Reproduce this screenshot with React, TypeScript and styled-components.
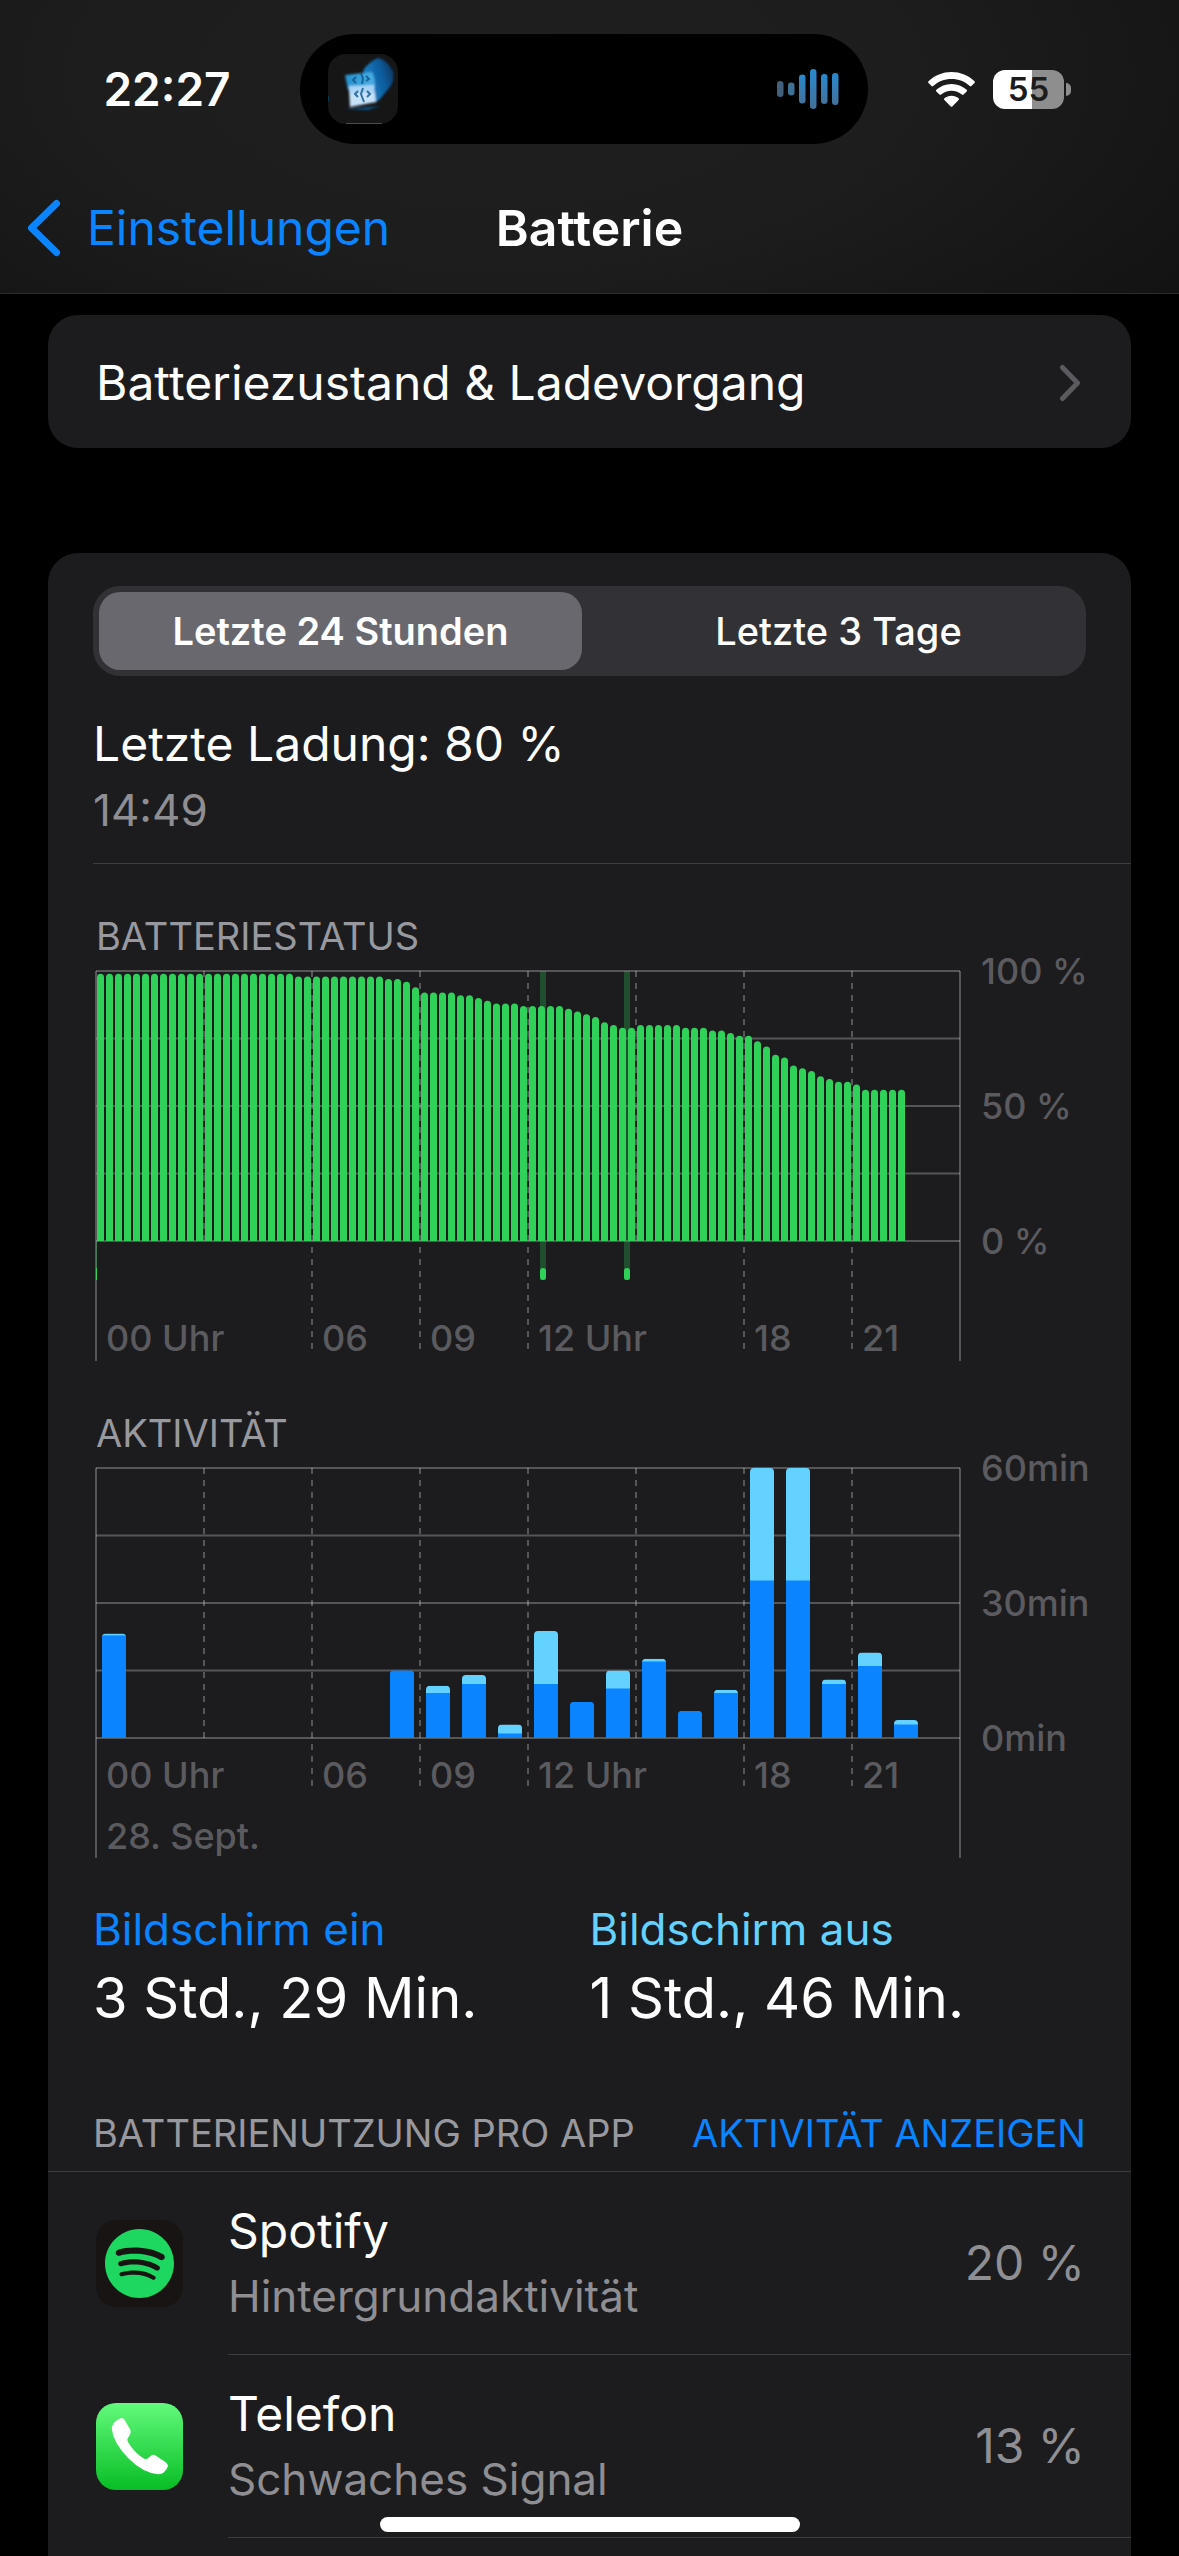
import React, { useState } from 'react';
import styled, { createGlobalStyle } from 'styled-components';

const color = {
  blue: '#0a84ff',
  sky: '#64d2ff',
  green: '#30d158',
  card: '#1c1c1e',
  line: '#3d3d41',
  axis: '#5b5b5f',
  secondary: '#8e8e93',
  caption: '#98989f',
};

const Global = createGlobalStyle`
  *, *::before, *::after { box-sizing: border-box; }
  html, body { margin: 0; background: #000; }
  body {
    color: #fff;
    font-family: Inter, "Liberation Sans", sans-serif;
    font-size: 48px;
    line-height: 60px;
  }
  h1, h2, p, ul { margin: 0; padding: 0; font: inherit; }
  ul { list-style: none; }
  button { margin: 0; padding: 0; border: 0; background: none; font: inherit; color: inherit; cursor: pointer; }
  svg { display: block; flex: none; }
`;

const Screen = styled.div`
  height: 100vh;
  overflow: hidden;
`;

const Header = styled.header`
  background: radial-gradient(ellipse 70% 130% at 42% 25%, #1f1f1f 0%, #1d1d1d 50%, #131313 100%);
  border-bottom: 1px solid #2b2b2c;
`;

const StatusBar = styled.div`
  display: grid;
  grid-template-columns: 1fr auto 1fr;
  align-items: center;
  padding: 34px 11px 18px 0;
`;

const Clock = styled.time`
  padding-left: 34px;
  text-align: center;
  font-size: 46px;
  font-weight: 600;
`;

const Island = styled.div`
  display: flex;
  align-items: center;
  justify-content: space-between;
  width: 568px;
  height: 110px;
  padding: 0 29px 0 28px;
  border-radius: 55px;
  background: #000;
`;

const StatusIcons = styled.div`
  display: flex;
  align-items: center;
  gap: 18px;
  padding-left: 60px;
`;

const BatteryWrap = styled.div`
  display: flex;
  align-items: center;
  gap: 2px;
`;

const BatteryBody = styled.div`
  width: 71px;
  height: 39px;
  border-radius: 12px;
  background: linear-gradient(90deg, #fff 55%, #8e8e8e 55%);
  color: #1c1c1c;
  font-size: 33px;
  font-weight: 600;
  line-height: 39px;
  text-align: center;
`;

const BatteryCap = styled.div`
  width: 5px;
  height: 13px;
  border-radius: 0 6px 6px 0;
  background: #8e8e8e;
`;

const NavBar = styled.nav`
  display: grid;
  grid-template-columns: 1fr auto 1fr;
  align-items: center;
  height: 131px;
`;

const BackButton = styled.button`
  display: flex;
  align-items: center;
  gap: 26px;
  padding-left: 27px;
  color: ${color.blue};
`;

const NavTitle = styled.h1`
  font-size: 50px;
  font-weight: 600;
`;

const Content = styled.main`
  display: flex;
  flex-direction: column;
  gap: 105px;
  padding: 21px 48px 0;
`;

const LinkCard = styled.button`
  display: flex;
  align-items: center;
  justify-content: space-between;
  width: 100%;
  height: 133px;
  padding: 2px 50px 0 48px;
  border-radius: 30px;
  background: ${color.card};
  text-align: left;
`;

const Card = styled.section`
  padding: 33px 0 60px;
  border-radius: 30px;
  background: ${color.card};
`;

const Segmented = styled.fieldset`
  display: grid;
  grid-template-columns: 1fr 1fr;
  gap: 15px;
  margin: 0 45px;
  padding: 6px;
  border: 0;
  border-radius: 27px;
  background: #313136;
`;

const Segment = styled.label<{ $active: boolean }>`
  border-radius: 21px;
  background: ${(p) => (p.$active ? '#69686f' : 'transparent')};
  font-size: 38px;
  font-weight: ${(p) => (p.$active ? 600 : 500)};
  line-height: 78px;
  text-align: center;
  cursor: pointer;
`;

const HiddenRadio = styled.input`
  position: absolute;
  width: 1px;
  height: 1px;
  margin: 0;
  opacity: 0;
`;

const LastCharge = styled.div`
  display: flex;
  flex-direction: column;
  gap: 9px;
  margin-left: 45px;
  padding: 38px 0 26px;
  border-bottom: 1px solid ${color.line};
`;

const Secondary = styled.p`
  color: ${color.secondary};
  font-size: 44px;
  line-height: 54px;
`;

const ChartSection = styled.section`
  padding: 53px 0 0 48px;
`;

const ChartTitle = styled.h2`
  color: ${color.caption};
  font-size: 38px;
  line-height: 38px;
`;

const ChartGrid = styled.div`
  display: grid;
  grid-template-columns: 1fr 171px;
`;

const Plot = styled.div`
  display: grid;
  grid-template-rows: 270px 120px;
  margin-top: 16px;
`;

const PlotDrawing = styled.svg`
  grid-area: 1 / 1 / 3 / 2;
  width: 100%;
  height: 390px;
  overflow: visible;
`;

const XAxis = styled.div<{ $top: number }>`
  grid-area: 2 / 1 / 3 / 2;
  display: flex;
  flex-direction: column;
  gap: 21px;
  padding-top: ${(p) => p.$top}px;
  color: ${color.axis};
  font-size: 36px;
  font-weight: 500;
  line-height: 40px;
`;

const Ticks = styled.div`
  display: grid;
  grid-template-columns: repeat(8, 1fr);
`;

const Tick = styled.span`
  width: 0;
  padding-left: 10px;
  white-space: nowrap;
`;

const YAxis = styled.div`
  display: flex;
  flex-direction: column;
  justify-content: space-between;
  height: 302px;
  padding-left: 21px;
  color: ${color.axis};
  font-size: 36px;
  font-weight: 500;
  line-height: 32px;
`;

const Totals = styled.div`
  display: grid;
  grid-template-columns: 1fr 1fr;
  padding: 44px 45px 77px;
`;

const TotalLabel = styled.p<{ $tone: string }>`
  margin-bottom: 7px;
  color: ${(p) => p.$tone};
  font-size: 44px;
  line-height: 54px;
`;

const TotalValue = styled.p`
  font-size: 56px;
  line-height: 70px;
`;

const ListHeader = styled.div`
  display: flex;
  justify-content: space-between;
  padding: 0 45px 15px;
  border-bottom: 1px solid ${color.line};
  color: ${color.caption};
  font-size: 38px;
  line-height: 46px;
  white-space: nowrap;
`;

const ListAction = styled.button`
  color: ${color.blue};
`;

const AppRow = styled.li`
  display: flex;
  align-items: center;
  gap: 45px;
  padding-left: 48px;
`;

const AppBody = styled.div`
  display: flex;
  flex: 1;
  align-items: center;
  justify-content: space-between;
  height: 183px;
  padding-right: 46px;
  border-bottom: 1px solid ${color.line};
`;

const AppText = styled.div`
  display: flex;
  flex-direction: column;
  gap: 8px;
  padding-bottom: 3px;
`;

const AppShare = styled.span`
  color: ${color.secondary};
`;

const HomeIndicator = styled.div`
  position: fixed;
  bottom: 24px;
  left: 50%;
  width: 420px;
  height: 15px;
  margin-left: -210px;
  border-radius: 8px;
  background: #fff;
`;

const run = (count: number, value: number): number[] => Array(count).fill(value);

/* Charge level in percent, one value for each quarter of an hour. */
const levels: number[] = [
  ...run(22, 99), ...run(10, 98), 97, 97, 96, 94, ...run(4, 92), 91, 91, 90, 89,
  88, 88, 88, ...run(5, 87), 86, 85, 84, 83, 81, 80, 79, 79, ...run(5, 80),
  79, 79, 79, 78, 78, 77, 76, 76, 74, 72, 69, 68, 65, 64, 63, 61, 60, 59, 59, 58,
  ...run(5, 56),
];

/* Minutes for each hour: [hour, screen on, on and off together]. */
const activity: [number, number, number][] = [
  [0, 22.8, 23.2], [8, 15, 15], [9, 10, 11.6], [10, 12, 14], [11, 1, 3],
  [12, 12, 23.8], [13, 8, 8], [14, 11, 15], [15, 17, 17.6], [16, 6, 6],
  [17, 10, 10.7], [18, 35, 60], [19, 35, 60], [20, 12, 13], [21, 16, 19], [22, 3, 4],
];

const PLOT = 270;
const pct = (part: number, whole: number) => `${(part / whole) * 100}%`;

function GridLines({ tickEnd }: { tickEnd: number }) {
  return (
    <g stroke="#fff" strokeOpacity={0.26} strokeWidth={2}>
      {[0, 0.25, 0.5, 0.75, 1].map((f) => (
        <line key={f} x1="0" x2="100%" y1={PLOT * f} y2={PLOT * f} />
      ))}
      <line x1="0" x2="0" y1="0" y2="390" />
      <line x1="100%" x2="100%" y1="0" y2="390" />
      {[3, 6, 9, 12, 15, 18, 21].map((h) => (
        <line
          key={h}
          x1={pct(h, 24)}
          x2={pct(h, 24)}
          y1="0"
          y2={h === 3 || h === 15 ? PLOT : tickEnd}
          strokeDasharray="6 6"
        />
      ))}
    </g>
  );
}

function BatteryPlot() {
  return (
    <PlotDrawing role="img" aria-label="Batteriestatus">
      <defs>
        <clipPath id="level-area"><rect x="0" y="-2" width="100%" height={PLOT + 2} /></clipPath>
      </defs>
      <GridLines tickEnd={384} />
      {[444, 528].map((x) => (
        <React.Fragment key={x}>
          <rect x={pct(x, 864)} y="0" width="6" height="309" fill={color.green} opacity={0.28} />
          <rect x={pct(x, 864)} y="297" width="6" height="12" rx="3" fill={color.green} />
        </React.Fragment>
      ))}
      <rect x="0" y="270" width="1" height="27" fill={color.green} opacity={0.28} />
      <rect x="0" y="297" width="1" height="12" fill={color.green} />
      <g clipPath="url(#level-area)">
        {levels.map((v, i) => (
          <svg key={i} x={pct(i, 96)} overflow="visible">
            <rect
              x="1"
              y={PLOT * (1 - v / 100)}
              width="7"
              height={(PLOT * v) / 100 + 8}
              rx="3.5"
              fill={color.green}
            />
          </svg>
        ))}
      </g>
    </PlotDrawing>
  );
}

function ActivityPlot() {
  return (
    <PlotDrawing role="img" aria-label="Aktivität">
      <GridLines tickEnd={324} />
      {activity.map(([hour, on, total]) => {
        const top = PLOT * (1 - total / 60);
        const split = PLOT * (1 - on / 60);
        return (
          <svg key={hour} x={pct(hour, 24)} overflow="visible">
            <clipPath id={`hour-${hour}`}>
              <path d={`M6 ${PLOT}V${top + 4}q0-4 4-4h16q4 0 4 4V${PLOT}z`} />
            </clipPath>
            <g clipPath={`url(#hour-${hour})`}>
              <rect x="6" y={top} width="24" height={PLOT - top} fill={total > on ? color.sky : color.blue} />
              <rect x="6" y={split} width="24" height={PLOT - split} fill={color.blue} />
            </g>
          </svg>
        );
      })}
    </PlotDrawing>
  );
}

const hours = ['00 Uhr', '', '06', '09', '12 Uhr', '', '18', '21'];

function Chart(props: {
  title: string;
  scale: string[];
  tickOffset: number;
  date?: string;
  children: React.ReactNode;
}) {
  return (
    <ChartSection>
      <ChartTitle>{props.title}</ChartTitle>
      <ChartGrid>
        <Plot>
          {props.children}
          <XAxis $top={props.tickOffset}>
            <Ticks>
              {hours.map((h, i) => <Tick key={i}>{h}</Tick>)}
            </Ticks>
            {props.date && <Tick>{props.date}</Tick>}
          </XAxis>
        </Plot>
        <YAxis>
          {props.scale.map((s) => <span key={s}>{s}</span>)}
        </YAxis>
      </ChartGrid>
    </ChartSection>
  );
}

function AlbumArt() {
  return (
    <svg width="70" height="79" viewBox="0 0 70 79">
      <defs>
        <clipPath id="art"><rect width="70" height="70" y="4" rx="18" /></clipPath>
        <filter id="soft" x="-20%" y="-20%" width="140%" height="140%"><feGaussianBlur stdDeviation="1.2" /></filter>
        <linearGradient id="back" x1="0.1" y1="0.6" x2="1" y2="0.2">
          <stop offset="0" stopColor="#1b83c8" />
          <stop offset="0.6" stopColor="#0c5a9a" />
          <stop offset="1" stopColor="#07365f" />
        </linearGradient>
        <linearGradient id="front" x1="0" y1="0" x2="1" y2="0">
          <stop offset="0" stopColor="#2590cc" />
          <stop offset="1" stopColor="#4ab0e6" />
        </linearGradient>
      </defs>
      <g clipPath="url(#art)">
        <rect y="4" width="70" height="70" fill="#161617" />
        <g filter="url(#soft)">
          <path d="M35 21Q40 12 50 8Q58 9 65 21Q67 30 62 37L51 50L46 53z" fill="url(#back)" />
          <path d="M17 25L44 22Q47 28 47 38L20 40z" fill="url(#front)" />
          <path d="M21 38L46 37L48 52L22 57z" fill="#c6e2fb" />
          <path d="M21 36L46 35V43L21 43z" fill="#a9d4f6" />
          <path d="M16 59L52 56L40 60z" fill="#0c4f80" />
        </g>
        <path d="M33 23l2 6-1 5M28 27l-3 3 3 3M38 26l3 3-3 2M35 38l-2 6 3 8M30 41l-3 3 3 3M39 41l3 3-3 3" fill="none" stroke="#0f5489" strokeWidth="2" opacity="0.8" />
        <path d="M18 73.500h36M0 46v5" stroke="#0f5c86" strokeWidth="1" />
      </g>
    </svg>
  );
}

function SoundWave() {
  const bars: [number, string][] = [
    [16, '#40607c'], [13, '#3f7195'], [29, 'url(#wave)'], [40, 'url(#wave)'], [30, 'url(#wave)'], [32, 'url(#wave)'],
  ];
  return (
    <svg width="62" height="40" viewBox="0 0 62 40">
      <linearGradient id="wave" x1="0" y1="0" x2="0" y2="1">
        <stop offset="0" stopColor="#2988cf" />
        <stop offset="1" stopColor="#43719a" />
      </linearGradient>
      {bars.map(([h, fill], i) => (
        <rect key={i} x={i * 11} y={(40 - h) / 2} width="6.5" height={h} rx="3.2" fill={fill} />
      ))}
    </svg>
  );
}

function Wifi() {
  return (
    <svg width="47" height="35" viewBox="0 0 47 35" fill="#fff">
      <path d="M23.5 0C32.300 0 40.500 3.400 46.500 9.200Q47.300 10 46.500 10.900L43.400 14.100Q42.600 14.800 41.800 14.100C37 9.500 30.500 7 23.500 7S10 9.500 5.200 14.100Q4.400 14.800 3.600 14.100L.5 10.900Q-.3 10 .5 9.200C6.500 3.400 14.700 0 23.500 0z" />
      <path d="M23.500 11.900C29.300 11.900 34.700 14.100 38.700 17.800Q39.500 18.600 38.700 19.400L35.500 22.600Q34.700 23.300 33.900 22.600C31.100 20.100 27.500 18.700 23.500 18.700S15.900 20.100 13.100 22.600Q12.300 23.300 11.500 22.600L8.300 19.400Q7.500 18.600 8.300 17.800C12.300 14.100 17.700 11.900 23.500 11.900z" />
      <path d="M23.500 23.700C26.200 23.700 28.700 24.700 30.600 26.300Q31.400 27.100 30.600 27.900L24.300 34.400Q23.500 35.200 22.700 34.400L16.400 27.900Q15.600 27.100 16.400 26.300C18.300 24.700 20.800 23.700 23.500 23.700z" />
    </svg>
  );
}

function SpotifyIcon() {
  return (
    <svg width="87" height="87" viewBox="0 0 87 87">
      <rect width="87" height="87" rx="20" fill="#191414" />
      <path
        transform="translate(9 9) scale(2.875)"
        fill="#1ed760"
        d="M12 0C5.400 0 0 5.400 0 12s5.400 12 12 12 12-5.400 12-12S18.660 0 12 0zm5.521 17.340c-.24.359-.66.48-1.021.24-2.820-1.740-6.360-2.101-10.561-1.141-.418.122-.779-.179-.899-.539-.12-.421.18-.78.54-.9 4.560-1.021 8.520-.6 11.640 1.320.42.18.479.659.301 1.020zm1.440-3.300c-.301.42-.841.6-1.262.3-3.239-1.980-8.159-2.580-11.939-1.380-.479.12-1.020-.12-1.140-.6-.12-.48.12-1.021.6-1.141C9.600 9.900 15 10.561 18.720 12.840c.361.181.54.78.241 1.200zm.12-3.360C15.240 8.400 8.820 8.160 5.160 9.301c-.6.179-1.200-.181-1.380-.721-.18-.601.18-1.200.72-1.381 4.260-1.260 11.280-1.020 15.721 1.621.539.3.719 1.020.419 1.560-.299.421-1.020.599-1.559.3z"
      />
    </svg>
  );
}

function PhoneIcon() {
  return (
    <svg width="87" height="87" viewBox="0 0 87 87">
      <linearGradient id="phone" x1="0" y1="0" x2="0" y2="1">
        <stop offset="0" stopColor="#62fa7b" />
        <stop offset="1" stopColor="#08bd25" />
      </linearGradient>
      <rect width="87" height="87" rx="20" fill="url(#phone)" />
      <path
        fill="#fff"
        d="M23.500 15.700Q26.600 13.800 28.500 16.800L34.200 26.500Q35.600 29.200 34 31.800L31.700 35.200Q30.800 37 32 39Q37.500 48.500 47 55Q49.500 56.700 51.500 55.400L55 52.800Q57.500 51 60 52.700L70 59.600Q72.800 61.800 71.400 64.500Q68 71.600 62 71.200Q47 70 32 55Q17 39 15.800 26Q15.600 19.500 23.500 15.700z"
      />
    </svg>
  );
}

function Chevron({ back }: { back?: boolean }) {
  return back ? (
    <svg width="34" height="58" viewBox="0 0 34 58" fill="none" stroke={color.blue} strokeWidth="7" strokeLinecap="round" strokeLinejoin="round">
      <path d="M29.500 4.500L4.500 29L29.500 53.500" />
    </svg>
  ) : (
    <svg width="22" height="38" viewBox="0 0 22 38" fill="none" stroke="#5a5a5f" strokeWidth="5" strokeLinecap="round" strokeLinejoin="round">
      <path d="M3.500 3.500L18.500 19L3.500 34.500" />
    </svg>
  );
}

const ranges = ['Letzte 24 Stunden', 'Letzte 3 Tage'];

const apps = [
  { name: 'Spotify', note: 'Hintergrundaktivität', share: '20 %', icon: <SpotifyIcon /> },
  { name: 'Telefon', note: 'Schwaches Signal', share: '13 %', icon: <PhoneIcon /> },
];

export default function App() {
  const [range, setRange] = useState(ranges[0]);
  return (
    <Screen>
      <Global />
      <Header>
        <StatusBar>
          <Clock>22:27</Clock>
          <Island>
            <AlbumArt />
            <SoundWave />
          </Island>
          <StatusIcons>
            <Wifi />
            <BatteryWrap>
              <BatteryBody>55</BatteryBody>
              <BatteryCap />
            </BatteryWrap>
          </StatusIcons>
        </StatusBar>
        <NavBar>
          <BackButton type="button">
            <Chevron back />
            Einstellungen
          </BackButton>
          <NavTitle>Batterie</NavTitle>
        </NavBar>
      </Header>

      <Content>
        <LinkCard type="button">
          Batteriezustand &amp; Ladevorgang
          <Chevron />
        </LinkCard>

        <Card>
          <Segmented aria-label="Zeitraum">
            {ranges.map((r) => (
              <Segment key={r} $active={r === range}>
                <HiddenRadio type="radio" name="range" checked={r === range} onChange={() => setRange(r)} />
                {r}
              </Segment>
            ))}
          </Segmented>

          <LastCharge>
            <p>Letzte Ladung: 80 %</p>
            <Secondary>14:49</Secondary>
          </LastCharge>

          <Chart title="BATTERIESTATUS" scale={['100 %', '50 %', '0 %']} tickOffset={77}>
            <BatteryPlot />
          </Chart>
          <Chart title="AKTIVITÄT" scale={['60min', '30min', '0min']} tickOffset={17} date="28. Sept.">
            <ActivityPlot />
          </Chart>

          <Totals>
            <div>
              <TotalLabel $tone={color.blue}>Bildschirm ein</TotalLabel>
              <TotalValue>3 Std., 29 Min.</TotalValue>
            </div>
            <div>
              <TotalLabel $tone={color.sky}>Bildschirm aus</TotalLabel>
              <TotalValue>1 Std., 46 Min.</TotalValue>
            </div>
          </Totals>

          <ListHeader>
            <h2>BATTERIENUTZUNG PRO APP</h2>
            <ListAction type="button">AKTIVITÄT ANZEIGEN</ListAction>
          </ListHeader>
          <ul>
            {apps.map((app) => (
              <AppRow key={app.name}>
                {app.icon}
                <AppBody>
                  <AppText>
                    <p>{app.name}</p>
                    <Secondary>{app.note}</Secondary>
                  </AppText>
                  <AppShare>{app.share}</AppShare>
                </AppBody>
              </AppRow>
            ))}
          </ul>
        </Card>
      </Content>
      <HomeIndicator />
    </Screen>
  );
}
